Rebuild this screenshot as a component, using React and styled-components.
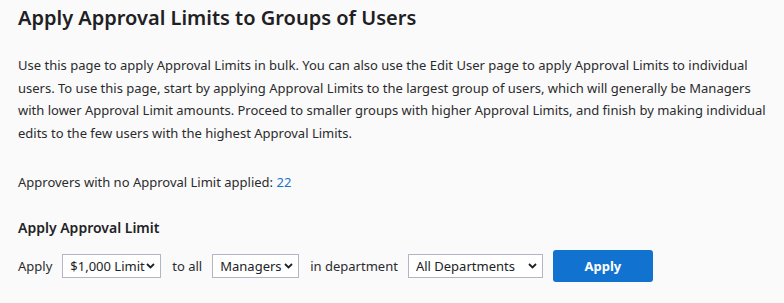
import React from "react";
import styled, { createGlobalStyle } from "styled-components";

const Global = createGlobalStyle`
  html, body { margin: 0; padding: 0; background: #fafafa; }
  body { font-family: "Noto Sans", "Open Sans", sans-serif; color: #222326; }
`;

const Page = styled.div`
  padding: 4px 18px 0 18px;
  width: 784px;
  box-sizing: border-box;
`;

const Title = styled.h1`
  margin: 0;
  font-size: 20px;
  font-weight: 600;
  line-height: 28px;
  color: #1f2024;
`;

const Para = styled.p`
  margin: 22px 0 0 0;
  font-size: 13px;
  line-height: 22.5px;
  color: #2a2b2e;
`;

const Stat = styled.p`
  margin: 28px 0 0 0;
  font-size: 13px;
  line-height: 20px;
  color: #2a2b2e;
`;

const Link = styled.a`
  color: #1a73c9;
  text-decoration: none;
`;

const SubTitle = styled.h2`
  margin: 26px 0 0 0;
  font-size: 14px;
  font-weight: 600;
  line-height: 20px;
  color: #222326;
`;

const Row = styled.div`
  display: flex;
  align-items: center;
  margin-top: 12px;
  font-size: 13px;
  color: #2a2b2e;
`;

const Label = styled.span`
  margin-right: ${(p) => p.$gap}px;
`;

const SelectWrap = styled.div`
  position: relative;
  width: ${(p) => p.$w}px;
  margin-right: ${(p) => p.$gap}px;
`;

const Select = styled.select`
  appearance: none;
  -webkit-appearance: none;
  width: 100%;
  height: 24px;
  box-sizing: border-box;
  border: 1px solid #b4b4c4;
  border-radius: 0;
  background: #ffffff;
  font-family: "Noto Sans", "Open Sans", sans-serif;
  font-size: 13px;
  color: #222326;
  padding: 0 10px 0 7px;
  outline: none;
`;

const Chevron = styled.svg`
  position: absolute;
  right: 6px;
  top: 9px;
  pointer-events: none;
`;

const Button = styled.button`
  width: 100px;
  height: 32px;
  border: none;
  border-radius: 3px;
  background: #1272cf;
  color: #ffffff;
  font-family: "Noto Sans", "Open Sans", sans-serif;
  font-size: 13px;
  font-weight: 700;
  cursor: pointer;
`;

function Dropdown({ w, gap, value, options }) {
  return (
    <SelectWrap $w={w} $gap={gap}>
      <Select defaultValue={value}>
        {options.map((o) => (
          <option key={o}>{o}</option>
        ))}
      </Select>
      <Chevron width="9" height="6" viewBox="0 0 9 6">
        <path d="M1 1 L4.5 4.5 L8 1" fill="none" stroke="#1f2024" strokeWidth="1.8" />
      </Chevron>
    </SelectWrap>
  );
}

export default function App() {
  return (
    <>
      <Global />
      <Page>
        <Title>Apply Approval Limits to Groups of Users</Title>
        <Para>
          Use this page to apply Approval Limits in bulk. You can also use the Edit User page to apply Approval Limits to individual
          users. To use this page, start by applying Approval Limits to the largest group of users, which will generally be Managers
          with lower Approval Limit amounts. Proceed to smaller groups with higher Approval Limits, and finish by making individual
          edits to the few users with the highest Approval Limits.
        </Para>
        <Stat>
          Approvers with no Approval Limit applied: <Link href="#">22</Link>
        </Stat>
        <SubTitle>Apply Approval Limit</SubTitle>
        <Row>
          <Label $gap={10}>Apply</Label>
          <Dropdown w={99} gap={11} value="$1,000 Limit" options={["$1,000 Limit", "$5,000 Limit", "$10,000 Limit"]} />
          <Label $gap={10}>to all</Label>
          <Dropdown w={87} gap={11} value="Managers" options={["Managers", "Directors", "Executives"]} />
          <Label $gap={10}>in department</Label>
          <Dropdown w={135} gap={10} value="All Departments" options={["All Departments", "Finance", "Sales"]} />
          <Button>Apply</Button>
        </Row>
      </Page>
    </>
  );
}
